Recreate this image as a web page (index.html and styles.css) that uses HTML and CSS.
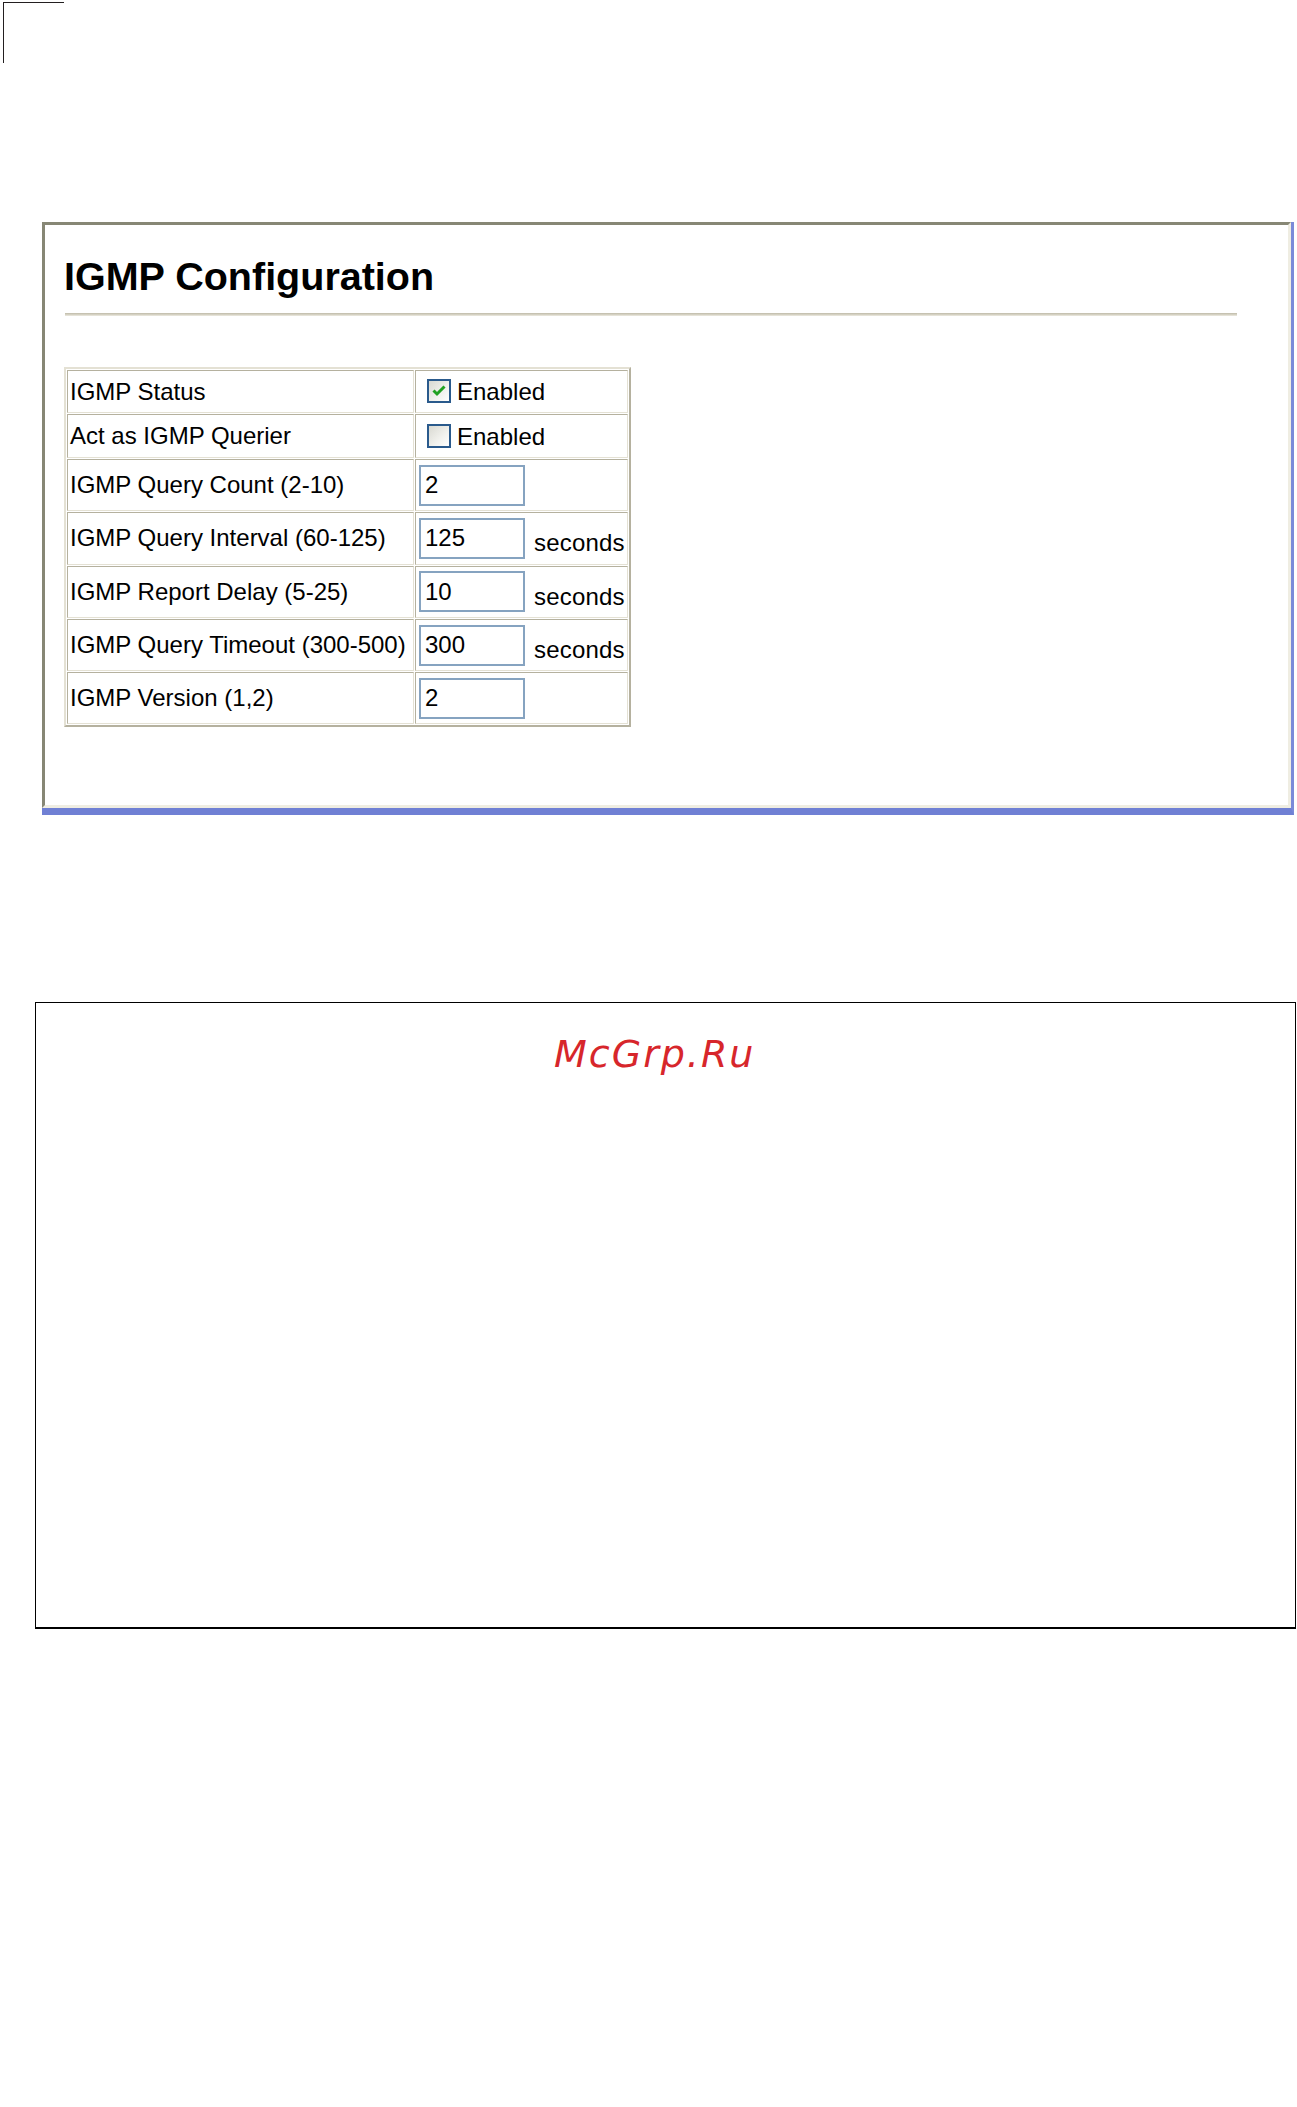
FILE: index.html
```html
<!DOCTYPE html>
<html>
<head>
<meta charset="utf-8">
<title>IGMP Configuration</title>
<link rel="stylesheet" href="styles.css">
</head>
<body>
<div class="corner"></div>

<div class="frame">
  <div class="panel">
    <h1 class="title">IGMP Configuration</h1>
    <div class="rule"></div>
    <table class="cfg">
      <tr class="short">
        <td class="lbl">IGMP Status</td>
        <td class="val"><span class="cb"><svg class="tick" viewBox="0 0 20 20" width="20" height="20"><path d="M4.5 9.5 L8 13 L15.5 5.5" fill="none" stroke="#21a121" stroke-width="3"/></svg></span><span class="cb-label">Enabled</span></td>
      </tr>
      <tr class="short second">
        <td class="lbl">Act as IGMP Querier</td>
        <td class="val"><span class="cb"></span><span class="cb-label">Enabled</span></td>
      </tr>
      <tr class="tall">
        <td class="lbl">IGMP Query Count (2-10)</td>
        <td class="val"><input class="txt" type="text" value="2"></td>
      </tr>
      <tr class="tall">
        <td class="lbl">IGMP Query Interval (60-125)</td>
        <td class="val"><input class="txt" type="text" value="125"><span class="unit">seconds</span></td>
      </tr>
      <tr class="tall">
        <td class="lbl">IGMP Report Delay (5-25)</td>
        <td class="val"><input class="txt" type="text" value="10"><span class="unit">seconds</span></td>
      </tr>
      <tr class="tall">
        <td class="lbl">IGMP Query Timeout (300-500)</td>
        <td class="val"><input class="txt" type="text" value="300"><span class="unit">seconds</span></td>
      </tr>
      <tr class="tall">
        <td class="lbl">IGMP Version (1,2)</td>
        <td class="val"><input class="txt" type="text" value="2"></td>
      </tr>
    </table>
  </div>
</div>

<div class="watermark"><span class="wm-text">McGrp.Ru</span></div>
</body>
</html>
```

FILE: styles.css
```css
html, body {
  margin: 0;
  padding: 0;
  background: #ffffff;
}

body {
  font-family: "Liberation Sans", Arial, sans-serif;
  color: #000000;
}

.corner {
  width: 60px;
  height: 60px;
  margin: 2px 0 0 3px;
  border-top: 1px solid #231f20;
  border-left: 1px solid #231f20;
}

.frame {
  margin: 159px 0 0 42px;
  width: 1249px;
  border-right: 3px solid #7b8ad9;
  border-bottom: 7px solid #7080d4;
}

.panel {
  border-top: 3px solid #878775;
  border-left: 3px solid #878775;
  border-right: 3px solid #efede2;
  border-bottom: 3px solid #efede2;
  padding: 32px 0 77.5px 19px;
  background: #ffffff;
}

.title {
  margin: 0;
  font-size: 39.5px;
  line-height: 39px;
  font-weight: bold;
  font-family: "Liberation Sans", Arial, sans-serif;
}

.rule {
  margin: 17px 0 0 1px;
  width: 1172px;
  height: 3px;
  background: linear-gradient(#bfbba9, #d8d5c7 60%, #eeece2);
}

.cfg {
  margin-top: 51px;
  border-collapse: separate;
  border-spacing: 1px;
  border: 2px solid;
  border-color: #e4e1d4 #b5b19f #b5b19f #e4e1d4;
  font-size: 24px;
}

.cfg td {
  box-sizing: border-box;
  border: 1px solid;
  border-color: #b5b19f #e4e1d4 #e4e1d4 #b5b19f;
  padding: 0;
  vertical-align: middle;
  white-space: nowrap;
}

.cfg tr.short td { height: 43px; }
.cfg tr.short.second td { height: 44px; }
.cfg tr.tall td { height: 52.3px; }

.cfg td.lbl {
  width: 347px;
  padding-left: 2px;
}

.cfg td.val {
  width: 213px;
  padding-left: 3px;
}

.cb {
  display: inline-block;
  box-sizing: border-box;
  width: 24px;
  height: 24px;
  margin-left: 8px;
  border: 2px solid #2a5a8c;
  background: linear-gradient(135deg, #d9d9d2 0%, #f2f2ee 60%, #ffffff 100%);
  vertical-align: middle;
  position: relative;
  top: -1px;
}

.tick {
  display: block;
}

.cb-label {
  margin-left: 6px;
  vertical-align: middle;
}

.txt {
  box-sizing: border-box;
  width: 106px;
  height: 41px;
  margin: 0;
  padding: 0 4px;
  border: 2px solid #86a3c0;
  font-family: "Liberation Sans", Arial, sans-serif;
  font-size: 24px;
  color: #000000;
  background: #ffffff;
  vertical-align: baseline;
  outline: none;
}

.unit {
  margin-left: 9px;
  vertical-align: -5px;
  letter-spacing: 0.2px;
}

.watermark {
  margin: 187px 0 0 35px;
  border-top: 1px solid #000000;
  border-left: 1px solid #000000;
  border-right: 1px solid #000000;
  border-bottom: 2px solid #000000;
  padding: 32px 0 0 518px;
  box-sizing: content-box;
  width: 741px;
  height: 592px;
}

.wm-text {
  display: inline-block;
  font-family: "DejaVu Sans", "Liberation Sans", sans-serif;
  font-style: italic;
  font-size: 38px;
  line-height: 38px;
  letter-spacing: 2px;
  color: #d7262b;
}
```
